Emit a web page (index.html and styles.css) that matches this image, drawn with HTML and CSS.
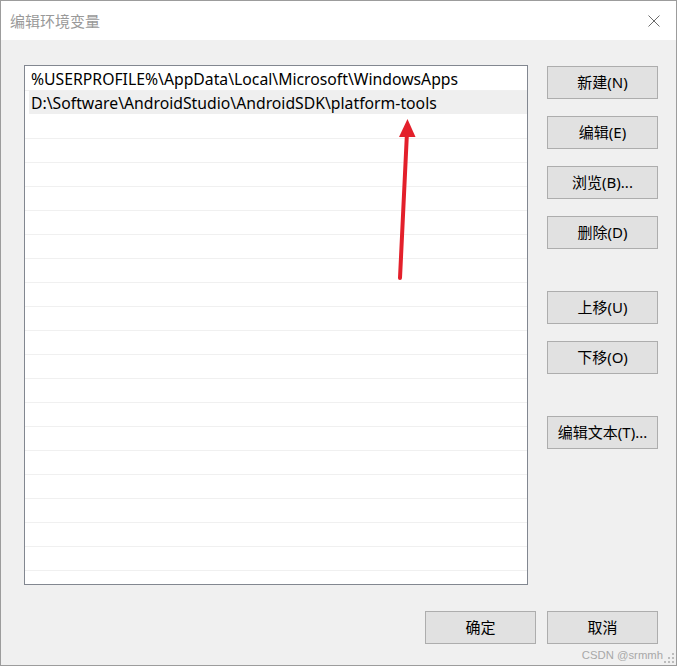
FILE: index.html
```html
<!DOCTYPE html>
<html lang="zh-CN">
<head>
<meta charset="utf-8">
<title>编辑环境变量</title>
<link rel="stylesheet" href="styles.css">
</head>
<body>
<div class="window">
  <div class="titlebar">
    <span class="title">编辑环境变量</span>
    <svg class="close" width="12" height="12" viewBox="0 0 12 12"><path d="M0.5 0.5 L11.5 11.5 M11.5 0.5 L0.5 11.5" stroke="#6b6b6b" stroke-width="1" fill="none"/></svg>
  </div>
  <div class="client">
    <div class="main">
      <div class="listbox">
        <div class="row"><div class="cell">%USERPROFILE%\AppData\Local\Microsoft\WindowsApps</div></div>
        <div class="row sel"><div class="cell">D:\Software\AndroidStudio\AndroidSDK\platform-tools</div></div>
        <div class="row"></div><div class="row"></div><div class="row"></div><div class="row"></div>
        <div class="row"></div><div class="row"></div><div class="row"></div><div class="row"></div>
        <div class="row"></div><div class="row"></div><div class="row"></div><div class="row"></div>
        <div class="row"></div><div class="row"></div><div class="row"></div><div class="row"></div>
        <div class="row"></div><div class="row"></div><div class="row"></div>
      </div>
      <div class="side">
        <button class="btn">新建(N)</button>
        <button class="btn">编辑(E)</button>
        <button class="btn">浏览(B)...</button>
        <button class="btn">删除(D)</button>
        <button class="btn gap">上移(U)</button>
        <button class="btn">下移(O)</button>
        <button class="btn gap">编辑文本(T)...</button>
      </div>
    </div>
    <div class="footer">
      <button class="btn">确定</button>
      <button class="btn">取消</button>
    </div>
  </div>
  <div class="watermark">CSDN @srmmh</div>
  <svg class="grip" width="10" height="10" viewBox="0 0 10 10">
    <rect x="8" y="0" width="2" height="2" fill="#bcbcbc"/>
    <rect x="4" y="4" width="2" height="2" fill="#bcbcbc"/>
    <rect x="8" y="4" width="2" height="2" fill="#bcbcbc"/>
    <rect x="0" y="8" width="2" height="2" fill="#bcbcbc"/>
    <rect x="4" y="8" width="2" height="2" fill="#bcbcbc"/>
    <rect x="8" y="8" width="2" height="2" fill="#bcbcbc"/>
  </svg>
  <svg class="arrow" width="677" height="666" viewBox="0 0 677 666">
    <line x1="400" y1="278" x2="407" y2="132" stroke="#e3202b" stroke-width="4" stroke-linecap="round"/>
    <polygon points="407.5,119 399,137 415.5,137" fill="#e3202b"/>
  </svg>
</div>
</body>
</html>
```

FILE: styles.css
```css
html, body {
  margin: 0;
  padding: 0;
  background: #f0f0f0;
}
body {
  font-family: "Noto Sans", "Noto Sans CJK SC", sans-serif;
}
.window {
  position: relative;
  width: 677px;
  height: 666px;
  box-sizing: border-box;
  border: 1px solid #9c9c9c;
  background: #f0f0f0;
  display: flex;
  flex-direction: column;
  overflow: hidden;
}
.titlebar {
  height: 39px;
  background: #ffffff;
  display: flex;
  align-items: center;
  justify-content: space-between;
  padding: 0 16px 0 9px;
  flex: none;
}
.title {
  font-family: "Noto Sans CJK SC", sans-serif;
  font-size: 15px;
  color: #999999;
  margin-top: -1px;
}
.close {
  display: block;
}
.client {
  flex: 1;
  display: flex;
  flex-direction: column;
  padding: 25px 18px 0 23px;
}
.main {
  display: flex;
  gap: 19px;
}
.listbox {
  width: 504px;
  height: 520px;
  box-sizing: border-box;
  border: 1px solid #828790;
  background: #ffffff;
  padding-top: 1px;
}
.row {
  height: 24px;
  box-sizing: border-box;
  border-bottom: 1px solid #f0f0f0;
  display: flex;
}
.cell {
  margin-left: 4px;
  flex: 1;
  padding-left: 2px;
  font-size: 15.75px;
  line-height: 24px;
  color: #000000;
  white-space: nowrap;
}
.row.sel {
  border-bottom-color: transparent;
}
.row.sel .cell {
  background: #efefef;
}
.side {
  display: flex;
  flex-direction: column;
  gap: 17px;
  padding-top: 1px;
}
.btn {
  width: 111px;
  height: 33px;
  box-sizing: border-box;
  border: 1px solid #adadad;
  background: #e1e1e1;
  font-family: "Noto Sans", "Noto Sans CJK SC", sans-serif;
  font-size: 15px;
  color: #000000;
  padding: 0 0 3px 0;
  margin: 0;
}
.btn.gap {
  margin-top: 25px;
}
.footer {
  display: flex;
  justify-content: flex-end;
  gap: 11px;
  margin-top: 26px;
}
.watermark {
  position: absolute;
  right: 13px;
  bottom: 4px;
  font-family: "Liberation Sans", sans-serif;
  font-size: 11.3px;
  color: #a8a8a8;
}
.grip {
  position: absolute;
  right: 2px;
  bottom: 2px;
}
.arrow {
  position: absolute;
  left: -1px;
  top: -1px;
  pointer-events: none;
}
```
